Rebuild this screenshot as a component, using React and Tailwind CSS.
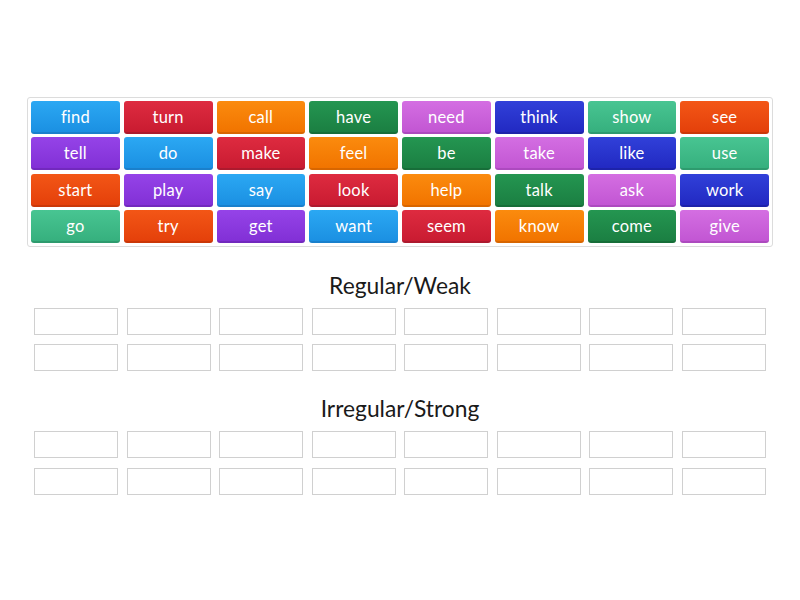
import React from 'react';

const colors = [
  'from-[#2ba8f3] to-[#1b90e2] border-[#1a80cc]',
  'from-[#de2b40] to-[#c91b31] border-[#ad1a2e]',
  'from-[#fb8b0e] to-[#f17400] border-[#d86600]',
  'from-[#249651] to-[#1b7f42] border-[#176e39]',
  'from-[#d46ee2] to-[#c256d3] border-[#ad4abf]',
  'from-[#3140d9] to-[#2229c2] border-[#1d23aa]',
  'from-[#48c592] to-[#36b07e] border-[#2e9b6e]',
  'from-[#f35616] to-[#e4400a] border-[#cb3808]',
  'from-[#9543e8] to-[#8230d6] border-[#7229be]',
];

const words = [
  'find', 'turn', 'call', 'have', 'need', 'think', 'show', 'see',
  'tell', 'do', 'make', 'feel', 'be', 'take', 'like', 'use',
  'start', 'play', 'say', 'look', 'help', 'talk', 'ask', 'work',
  'go', 'try', 'get', 'want', 'seem', 'know', 'come', 'give',
];

const DropZones = () => (
  <div className="mx-[34px] grid grid-cols-8 gap-x-[8.5px] gap-y-[9.5px]">
    {Array.from({ length: 16 }).map((_, i) => (
      <div key={i} className="h-[27px] border border-[#d0d0d0] bg-white" />
    ))}
  </div>
);

const Group = ({ title, className }) => (
  <section className={className}>
    <h2 className="text-center text-[22.8px] leading-[28px] text-[#1a1a1a] mb-[9px]">{title}</h2>
    <DropZones />
  </section>
);

export default function App() {
  return (
    <div
      className="w-[800px] h-[600px] bg-white overflow-hidden"
      style={{ fontFamily: 'Lato, "Noto Sans", sans-serif' }}
    >
      <div className="mx-[27px] mt-[97px] border border-[#dcdcdc] rounded-[3px] p-[3px]">
        <div className="grid grid-cols-8 gap-x-1 gap-y-[3.3px]">
          {words.map((w, i) => (
            <div
              key={w}
              className={`h-[33px] rounded-[3px] border-b-2 pt-[2px] bg-linear-to-b flex items-center justify-center text-white text-[16.5px] tracking-[0.2px] ${colors[i % 9]}`}
            >
              {w}
            </div>
          ))}
        </div>
      </div>

      <Group title="Regular/Weak" className="mt-[24px]" />
      <Group title="Irregular/Strong" className="mt-[23px]" />
    </div>
  );
}
